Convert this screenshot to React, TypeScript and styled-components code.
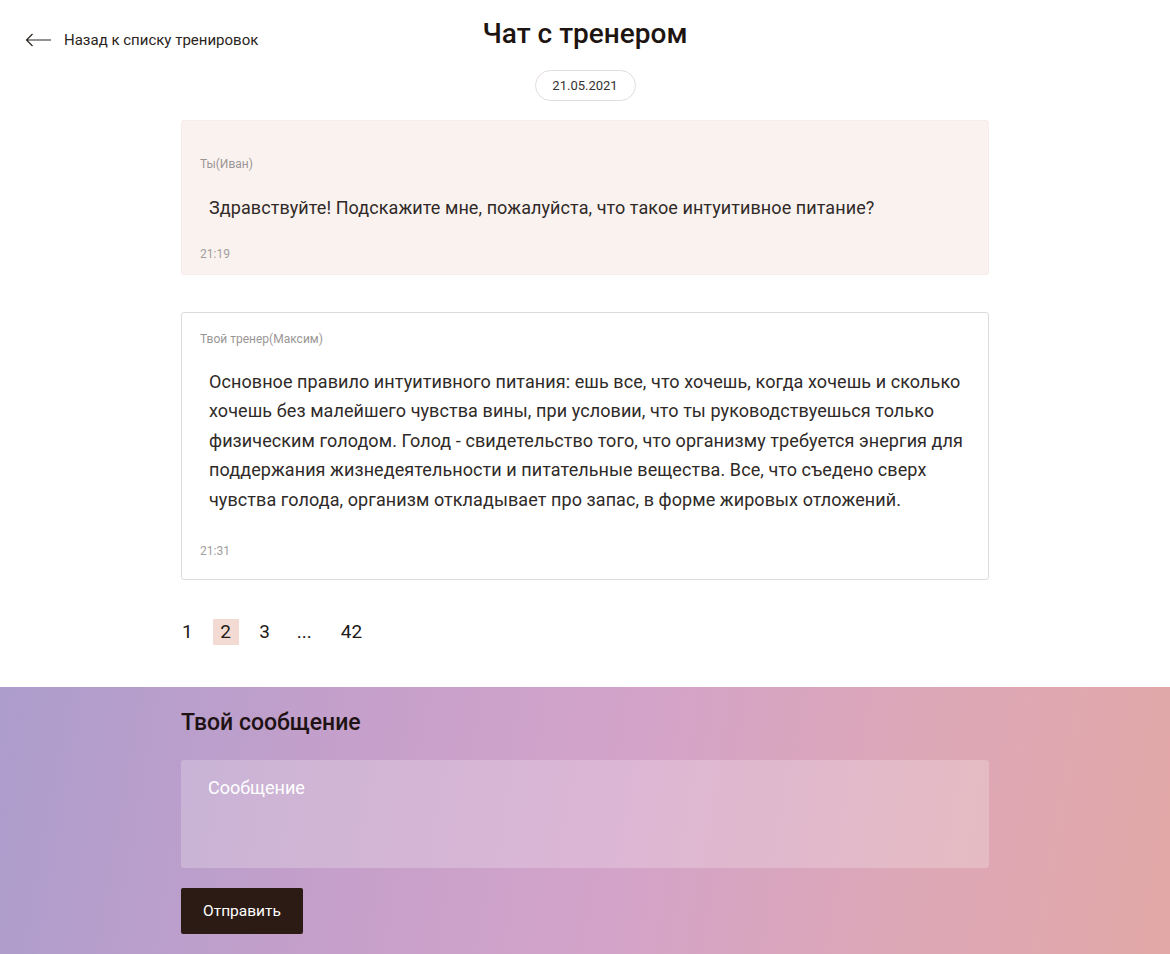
import styled, { createGlobalStyle } from "styled-components";

//Global page styles
const GlobalStyle = createGlobalStyle`
  * { box-sizing: border-box; }
  body {
    margin: 0;
    background: #ffffff;
    font-family: Roboto, "Noto Sans", sans-serif;
    color: #2b2b2b;
  }
`;

const Page = styled.div`
  min-height: 954px;
  display: flex;
  flex-direction: column;
`;

//Top bar with back link and title
const Header = styled.header`
  position: relative;
  display: flex;
  flex-direction: column;
  align-items: center;
  padding-top: 17px;
`;

const BackLink = styled.a`
  position: absolute;
  left: 25px;
  top: 31px;
  display: flex;
  align-items: center;
  gap: 12px;
  font-size: 15px;
  color: #2b2521;
  text-decoration: none;
  cursor: pointer;
`;

const Title = styled.h1`
  margin: 0;
  font-size: 28px;
  font-weight: 500;
  color: #1e1512;
  line-height: 34px;
`;

const DatePill = styled.div`
  margin-top: 19px;
  width: 101px;
  height: 31px;
  border: 1px solid #e3dcdc;
  border-radius: 16px;
  display: flex;
  align-items: center;
  justify-content: center;
  font-size: 13px;
  color: #333;
`;

//Chat column
const Chat = styled.main`
  width: 808px;
  margin: 19px auto 0;
  display: flex;
  flex-direction: column;
  gap: 37px;
`;

const Message = styled.div<{ $own?: boolean }>`
  background: ${(p) => (p.$own ? "#faf2ef" : "#ffffff")};
  border: 1px solid ${(p) => (p.$own ? "#f6ecea" : "#dcdcdc")};
  border-radius: 3px;
  padding: ${(p) => (p.$own ? "36px 18px 13px" : "19px 18px 21px")};
`;

const Author = styled.div`
  font-size: 12px;
  color: #9a9696;
  line-height: 14px;
`;

const Text = styled.p<{ $own?: boolean }>`
  margin: ${(p) => (p.$own ? "22px 0 24px" : "21px 0 29px")};
  padding-left: 9px;
  font-size: 18px;
  line-height: 29.6px;
  letter-spacing: 0.08px;
  color: #2f2a28;
  white-space: nowrap;
`;

const Time = styled.div`
  font-size: 12px;
  color: #a29e9e;
  line-height: 14px;
`;

//Pagination
const Pager = styled.nav`
  width: 808px;
  margin: 39px auto 42px;
  display: flex;
  align-items: center;
`;

const PageItem = styled.span<{ $active?: boolean; $space?: number }>`
  min-width: 26px;
  height: 26px;
  padding: 0 6px;
  display: flex;
  align-items: center;
  justify-content: center;
  font-size: 19px;
  color: #1e1a18;
  background: ${(p) => (p.$active ? "#f3dad3" : "transparent")};
  margin-right: ${(p) => p.$space ?? 13}px;
  &:first-child {
    padding-left: 0;
    justify-content: flex-start;
    min-width: 0;
    margin-left: 1px;
  }
`;

//Bottom form
const Composer = styled.section`
  flex: 1;
  background: linear-gradient(100deg, #ad9dcd 0%, #c5a0ca 30%, #d3a3ca 52%, #dca7b8 75%, #e2a8a7 100%);
  padding: 22px 0 19px;
`;

const ComposerInner = styled.div`
  width: 808px;
  margin: 0 auto;
  display: flex;
  flex-direction: column;
  align-items: flex-start;
`;

const ComposerTitle = styled.h2`
  margin: 0;
  font-size: 23px;
  font-weight: 500;
  color: #1e1214;
  line-height: 28px;
`;

const Input = styled.textarea`
  margin-top: 23px;
  width: 100%;
  height: 108px;
  resize: none;
  border: none;
  border-radius: 3px;
  background: rgba(255, 255, 255, 0.22);
  padding: 17px 27px;
  font-family: inherit;
  font-size: 18px;
  color: #fff;
  outline: none;
  &::placeholder {
    color: #ffffff;
  }
`;

const SendButton = styled.button`
  margin-top: 20px;
  width: 122px;
  height: 46px;
  background: #2b1b14;
  border: none;
  border-radius: 2px;
  color: #fff;
  font-family: inherit;
  font-size: 15.5px;
  cursor: pointer;
`;

const ArrowLeft = () => (
  <svg width="27" height="14" viewBox="0 0 27 14" fill="none" stroke="#2b2521" strokeWidth="1.2">
    <path d="M26 7H1.5M7.5 1L1.5 7l6 6" />
  </svg>
);

const trainerLines = [
  "Основное правило интуитивного питания: ешь все, что хочешь, когда хочешь и сколько",
  "хочешь без малейшего чувства вины, при условии, что ты руководствуешься только",
  "физическим голодом. Голод - свидетельство того, что организму требуется энергия для",
  "поддержания жизнедеятельности и питательные вещества. Все, что съедено сверх",
  "чувства голода, организм откладывает про запас, в форме жировых отложений.",
];

const App = () => {
  return (
    <Page>
      <GlobalStyle />
      <Header>
        <BackLink>
          <ArrowLeft />
          Назад к списку тренировок
        </BackLink>
        <Title>Чат с тренером</Title>
        <DatePill>21.05.2021</DatePill>
      </Header>
      <Chat>
        <Message $own>
          <Author>Ты(Иван)</Author>
          <Text $own>Здравствуйте! Подскажите мне, пожалуйста, что такое интуитивное питание?</Text>
          <Time>21:19</Time>
        </Message>
        <Message>
          <Author>Твой тренер(Максим)</Author>
          <Text>
            {trainerLines.map((line, i) => (
              <span key={i}>
                {line}
                {i < trainerLines.length - 1 && <br />}
              </span>
            ))}
          </Text>
          <Time>21:31</Time>
        </Message>
      </Chat>
      <Pager>
        <PageItem $space={14}>1</PageItem>
        <PageItem $active>2</PageItem>
        <PageItem>3</PageItem>
        <PageItem $space={17}>...</PageItem>
        <PageItem>42</PageItem>
      </Pager>
      <Composer>
        <ComposerInner>
          <ComposerTitle>Твой сообщение</ComposerTitle>
          <Input placeholder="Сообщение" />
          <SendButton>Отправить</SendButton>
        </ComposerInner>
      </Composer>
    </Page>
  );
};

export default App;
